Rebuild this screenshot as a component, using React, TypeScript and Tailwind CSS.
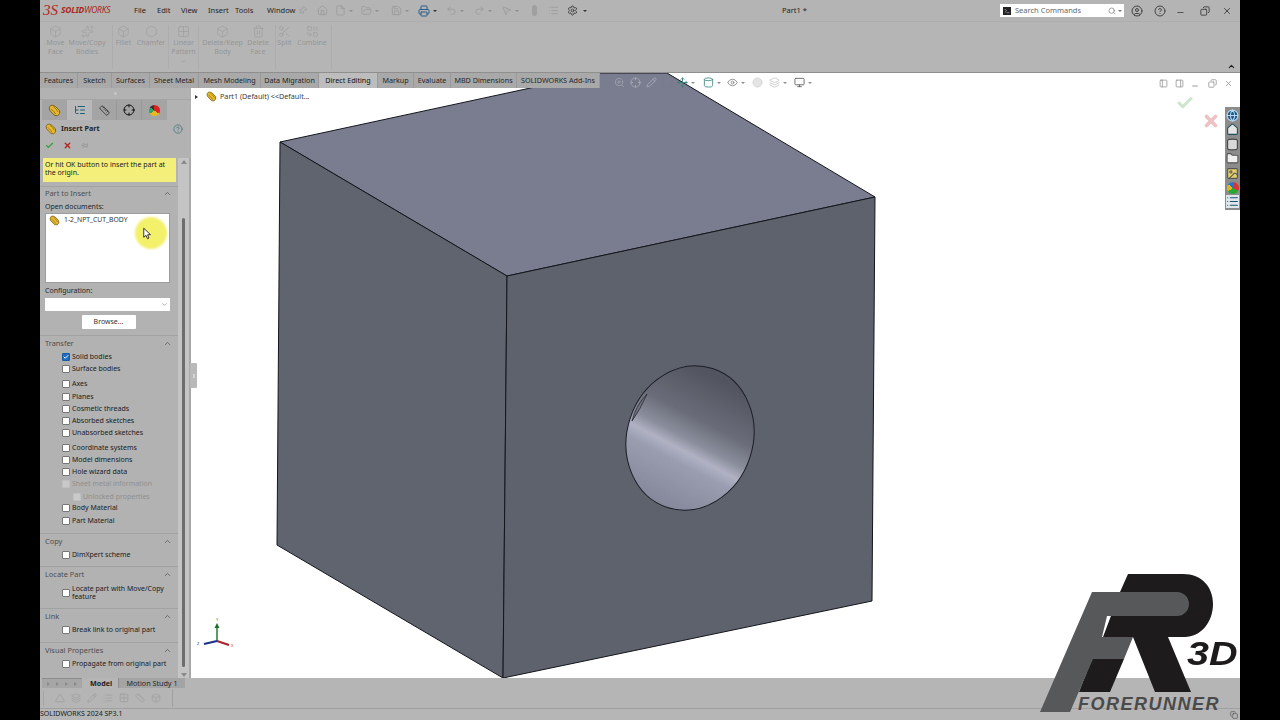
import React from "react";
import {
  Home, File, FolderOpen, Save, Printer, Undo2, Redo2, MousePointer2, Settings, Pin, Search,
  CircleUser, CircleHelp, Minus, X, Copy, ChevronUp, ChevronDown, Check, Box, Layers, Hexagon, Circle,
  Grid2x2, Trash2, Scissors, Combine, Monitor, Eye, Sparkles, ZoomIn, Pencil, Terminal, Globe,
  Folder, Image, List, Cylinder, PanelLeft, PanelRight, Triangle, Ruler, ListTree, Crosshair, Move, SquareDashed,
} from "lucide-react";

const MENU = [
  { label: "File", w: "w-[23px]" },
  { label: "Edit", w: "w-[24px]" },
  { label: "View", w: "w-[27px]" },
  { label: "Insert", w: "w-[27px]" },
  { label: "Tools", w: "w-[32px]" },
  { label: "Window", w: "w-[32px]" },
];

const RIBBON_CMDS = [
  { icon: Box, lines: ["Move", "Face"], w: "w-[31px]" },
  { icon: Sparkles, lines: ["Move/Copy", "Bodies"], w: "w-[32px] mr-[9px]" },
  { sep: true },
  { icon: Box, lines: ["Fillet"], w: "w-[21px]" },
  { icon: Hexagon, lines: ["Chamfer"], w: "w-[34px]" },
  { sep: true },
  { icon: Grid2x2, lines: ["Linear", "Pattern"], w: "w-[29px]", caret: true },
  { sep: true },
  { icon: Box, lines: ["Delete/Keep", "Body"], w: "w-[47px]" },
  { icon: Trash2, lines: ["Delete", "Face"], w: "w-[24px] mr-[5px]" },
  { sep: true },
  { icon: Scissors, lines: ["Split"], w: "w-[17px]" },
  { icon: Combine, lines: ["Combine"], w: "w-[38px]" },
  { sep: true },
];

const TABS = [
  { label: "Features", w: "w-[38px]" },
  { label: "Sketch", w: "w-[34px]" },
  { label: "Surfaces", w: "w-[38px]" },
  { label: "Sheet Metal", w: "w-[49px]" },
  { label: "Mesh Modeling", w: "w-[62px]" },
  { label: "Data Migration", w: "w-[58px]" },
  { label: "Direct Editing", w: "w-[59px]", active: true },
  { label: "Markup", w: "w-[36px]" },
  { label: "Evaluate", w: "w-[37px]" },
  { label: "MBD Dimensions", w: "w-[66px]" },
  { label: "SOLIDWORKS Add-Ins", w: "w-[83px]" },
];

function PartIcon({ className }: { className?: string }) {
  return (
    <svg viewBox="0 0 16 16" className={className}>
      <path d="M1.5 4.5 Q2.5 1 6 1.5 Q9 2 14 8 Q15.5 12.5 11.5 14.5 Q8 15 5.5 11.5 L2 7.5 Z" fill="#e8b92e" stroke="#6b5310" strokeWidth="1" />
      <path d="M3.5 6 Q6 7 9.5 12.5 M6.5 3 Q10 5.5 12.5 10" stroke="#8a6d16" strokeWidth="1" fill="none" />
    </svg>
  );
}

function Dropdown() {
  return <span className="ml-[3px] w-0 h-0 border-x-[2px] border-x-transparent border-t-[2px] border-t-[#8e8e8e]" />;
}

function TitleBar() {
  const ghost = "w-[11px] h-[11px] text-[#9c9c9c]";
  return (
    <div className="relative h-[22px] bg-[#b4b4b4] flex items-center pl-[3px] border-b border-[#adadad]">
      <div className="w-[91px] flex items-center">
        <span className="text-[15px] leading-none italic text-[#b3241c] [font-family:'Liberation_Serif',serif]">3S</span>
        <span className="ml-[3px] text-[8.5px] font-bold italic tracking-[-0.2px] text-[#a8281f]">SOLID<span className="font-normal">WORKS</span></span>
      </div>
      {MENU.map((m) => (
        <span key={m.label} className={`${m.w} text-[7.5px] text-[#1f1f1f] shrink-0`}>{m.label}</span>
      ))}
      <Pin className="ml-[-1px] w-[9px] h-[9px] text-[#9a9a9a] rotate-45" />
      <div className="ml-[10px] flex items-center">
        <Home className={ghost} />
        <span className="w-[7px]" />
        <File className={ghost} />
        <Dropdown />
        <span className="w-[8px]" />
        <FolderOpen className={ghost} />
        <Dropdown />
        <span className="w-[12px]" />
        <Save className={ghost} />
        <Dropdown />
        <span className="w-[9px]" />
        <Printer className="w-[12px] h-[12px] text-[#2a5f8e]" />
        <span className="ml-[3px] w-0 h-0 border-x-[2px] border-x-transparent border-t-[2px] border-t-[#333333]" />
        <span className="w-[9px]" />
        <Undo2 className={ghost} />
        <Dropdown />
        <span className="w-[10px]" />
        <Redo2 className={ghost} />
        <Dropdown />
        <span className="w-[9px]" />
        <MousePointer2 className={ghost} />
        <Dropdown />
        <span className="w-[13px]" />
        <span className="w-[5px] h-[11px] rounded-full bg-[#a0a0a0]" />
        <span className="w-[11px]" />
        <List className={ghost} />
        <span className="w-[8px]" />
        <Settings className="w-[11px] h-[11px] text-[#3c3c3c]" />
        <span className="ml-[5px] w-0 h-0 border-x-[2px] border-x-transparent border-t-[2px] border-t-[#333333]" />
      </div>
      <span className="absolute left-[742px] text-[7.5px] text-[#222222]">Part1 *</span>
      <div className="ml-auto flex items-center">
        <div className="w-[124px] h-[13px] bg-white flex items-center pl-[3px]">
          <Terminal className="w-[8px] h-[8px] p-[1px] bg-[#222222] text-white" />
          <span className="ml-[4px] text-[7.5px] text-[#666666]">Search Commands</span>
          <Search className="ml-auto w-[8px] h-[8px] text-[#777777]" />
          <span className="ml-[2px] mr-[2px] w-0 h-0 border-x-[2px] border-x-transparent border-t-[2px] border-t-[#777777]" />
        </div>
        <CircleUser className="ml-[7px] w-[12px] h-[12px] text-[#444444]" />
        <CircleHelp className="ml-[11px] w-[12px] h-[12px] text-[#444444]" />
        <Minus className="ml-[10px] w-[9px] h-[9px] text-[#333333] translate-y-[2px]" />
        <Copy className="ml-[15px] w-[10px] h-[10px] text-[#333333] -scale-x-100" />
        <X className="ml-[12px] mr-[8px] w-[10px] h-[10px] text-[#333333]" />
      </div>
    </div>
  );
}

function Ribbon() {
  return (
    <div className="relative h-[50px] bg-[#b5b5b5] flex pt-[3px] pb-[1px]">
      {RIBBON_CMDS.map((c, i) => {
        if (c.sep) return <div key={i} className="w-px bg-[#adadad] h-[44px] shrink-0" />;
        const Icon = c.icon!;
        return (
          <div key={i} className={`${c.w} shrink-0 flex flex-col items-center`}>
            <Icon className="w-[13px] h-[13px] text-[#a0a0a0] shrink-0" strokeWidth={1.4} />
            {c.lines!.map((l) => (
              <span key={l} className="text-[7px] leading-[9px] text-[#959595] whitespace-nowrap">{l}</span>
            ))}
            {c.caret && <ChevronDown className="mt-[3px] w-[5px] h-[5px] text-[#8c8c8c]" />}
          </div>
        );
      })}
      <ChevronUp className="absolute right-[4px] bottom-[1px] w-[9px] h-[9px] text-[#222222]" strokeWidth={3} />
    </div>
  );
}

function Tabs() {
  return (
    <div className="absolute left-0 top-0 h-[16px] w-full z-10 pointer-events-none border-t border-[#8f8f8f]">
      <div className="h-full w-[560px] flex bg-[#a9a9a9]">
        {TABS.map((t) => (
          <div
            key={t.label}
            className={`${t.w} shrink-0 flex items-center justify-center pb-px text-[7.2px] whitespace-nowrap border-r border-[#9a9a9a] ${t.active ? "bg-[#bdbdbd] text-[#111111]" : "text-[#252525]"}`}
          >
            {t.label}
          </div>
        ))}
      </div>
    </div>
  );
}

function SectionHead({ label, first }: { label: string; first?: boolean }) {
  return (
    <div className={`flex items-center justify-between pl-[5px] pr-[6px] ${first ? "h-[14px] pb-px" : "h-[16px] border-t border-[#a2a2a2]"}`}>
      <span className="text-[7.4px] text-[#4e4e4e]">{label}</span>
      <ChevronUp className="w-[9px] h-[9px] text-[#555555]" strokeWidth={2} />
    </div>
  );
}

function CheckRow({
  label,
  checked,
  disabled,
  nested,
  className,
}: {
  label: string;
  checked?: boolean;
  disabled?: boolean;
  nested?: boolean;
  className?: string;
}) {
  return (
    <div className={`h-[12px] flex items-center ${nested ? "pl-[33px]" : "pl-[22px]"} ${className ?? ""}`}>
      <span
        className={`w-[8px] h-[8px] rounded-[1px] shrink-0 flex items-center justify-center border ${
          checked ? "bg-[#1f6fc0] border-[#1a5aa0]" : disabled ? "bg-[#c9c9c9] border-[#c0c0c0]" : "bg-white border-[#777777]"
        }`}
      >
        {checked && <Check className="w-[6px] h-[6px] text-white" strokeWidth={4} />}
      </span>
      <span className={`ml-[2px] text-[7px] whitespace-nowrap ${disabled ? "text-[#8f8f8f]" : "text-[#202020]"}`}>{label}</span>
    </div>
  );
}

function PropertyPanel() {
  return (
    <div className="w-[151px] shrink-0 flex flex-col pt-[16px] bg-[#b2b2b2] relative">
      {/* grip strip */}
      <div className="h-[12px] flex items-center justify-center border-b border-[#a5a5a5]">
        <span className="w-[3px] h-[3px] rounded-full bg-[#c6c6c6]" />
      </div>
      {/* tree / property tabs */}
      <div className="h-[20px] flex pl-[2px]">
        <div className="w-[25px] bg-[#a4a4a4] flex items-center justify-center"><PartIcon className="w-[13px] h-[13px]" /></div>
        <div className="w-[25px] bg-[#b9b9b9] flex items-center justify-center"><ListTree className="w-[12px] h-[12px] text-[#1f5f7a]" /></div>
        <div className="w-[25px] bg-[#a4a4a4] flex items-center justify-center border-r border-[#999999]"><Ruler className="w-[11px] h-[11px] text-[#333333]" /></div>
        <div className="w-[25px] bg-[#a4a4a4] flex items-center justify-center border-r border-[#999999]"><Crosshair className="w-[12px] h-[12px] text-[#111111]" /></div>
        <div className="w-[25px] bg-[#a4a4a4] flex items-center justify-center">
          <span className="w-[11px] h-[11px] rounded-full bg-[conic-gradient(#d22_0_35%,#e8b820_35%_65%,#2a6_65%_85%,#333_85%)]" />
        </div>
      </div>
      {/* title */}
      <div className="h-[17px] flex items-center pl-[5px] pr-[8px]">
        <PartIcon className="w-[12px] h-[12px]" />
        <span className="ml-[4px] text-[7.2px] font-bold text-[#262626]">Insert Part</span>
        <CircleHelp className="ml-auto w-[10px] h-[10px] text-[#4b7a80]" />
      </div>
      <div className="h-[16px] flex items-center pl-[5px]">
        <Check className="w-[9px] h-[9px] text-[#3a9a3a]" strokeWidth={3} />
        <X className="ml-[9px] w-[9px] h-[9px] text-[#b81e1e]" strokeWidth={3.5} />
        <Pin className="ml-[9px] w-[7px] h-[7px] text-[#8f8f8f] rotate-90" />
      </div>
      {/* scrolling body + scrollbar */}
      <div className="flex-1 flex min-h-0 mt-[5px]">
        <div className="w-[138px] shrink-0 flex flex-col">
          <div className="h-[24px] ml-[3px] mr-[2px] bg-[#f3ef7a] px-[2px] pt-[3px] text-[7px] leading-[8px] text-[#1b1b1b]">
            Or hit OK button to insert the part at the origin.
          </div>
          <div className="mt-[4px] border-t border-[#a2a2a2]" />
          <SectionHead label="Part to Insert" first />
          <div className="pl-[5px] pr-[8px] text-[7px] text-[#262626] h-[12px] leading-[12px]">Open documents:</div>
          <div className="ml-[5px] mr-[8px] h-[70px] bg-white border border-[#9c9c9c] pl-[3px] pt-[1px] flex items-start">
            <PartIcon className="w-[11px] h-[11px]" />
            <span className="ml-[4px] text-[6.8px] leading-[10px] text-[#333333]">1-2_NPT_CUT_BODY</span>
          </div>
          <div className="pl-[5px] h-[15px] leading-[16px] text-[7px] text-[#262626]">Configuration:</div>
          <div className="ml-[5px] mr-[8px] h-[13px] bg-white flex items-center justify-end pr-[2px]">
            <ChevronDown className="w-[7px] h-[7px] text-[#777777]" />
          </div>
          <div className="mt-[4px] mb-[6px] self-center ml-[-1px] w-[54px] h-[14px] bg-white rounded-[1px] flex items-center justify-center text-[7px] text-[#333333]">Browse...</div>

          <SectionHead label="Transfer" />
          <CheckRow label="Solid bodies" checked />
          <CheckRow label="Surface bodies" />
          <CheckRow className="mt-[3px]" label="Axes" />
          <CheckRow className="mt-px" label="Planes" />
          <CheckRow label="Cosmetic threads" />
          <CheckRow label="Absorbed sketches" />
          <CheckRow label="Unabsorbed sketches" />
          <CheckRow className="mt-[3px]" label="Coordinate systems" />
          <CheckRow label="Model dimensions" />
          <CheckRow label="Hole wizard data" />
          <CheckRow label="Sheet metal information" disabled />
          <CheckRow className="mt-px" label="Unlocked properties" disabled nested />
          <CheckRow className="mt-[-1px]" label="Body Material" />
          <CheckRow className="mt-px mb-[6px]" label="Part Material" />

          <SectionHead label="Copy" />
          <CheckRow className="mb-[5px]" label="DimXpert scheme" />

          <SectionHead label="Locate Part" />
          <div className="h-[19px] mt-px mb-[6px] flex items-center pl-[22px]">
            <span className="w-[8px] h-[8px] rounded-[1px] shrink-0 bg-white border border-[#777777]" />
            <span className="ml-[2px] text-[7px] leading-[8px] text-[#202020]">Locate part with Move/Copy feature</span>
          </div>

          <SectionHead label="Link" />
          <CheckRow className="mb-[6px]" label="Break link to original part" />

          <SectionHead label="Visual Properties" />
          <CheckRow label="Propagate from original part" />
        </div>
        {/* scrollbar */}
        <div className="w-[11px] bg-[#c4c4c4] flex flex-col items-center pt-[2px] pb-[1px]">
          <span className="w-0 h-0 border-x-[3px] border-x-transparent border-b-[4px] border-b-[#8a8a8a]" />
          <div className="mt-[54px] w-[3px] flex-1 bg-[#6d6d6d] rounded-full" />
          <span className="mt-[6px] w-0 h-0 border-x-[3px] border-x-transparent border-t-[4px] border-t-[#8a8a8a]" />
        </div>
        <div className="w-[2px] bg-[#a8a8a8]" />
      </div>
      {/* splitter handle */}
      <div className="absolute left-[150px] top-[291px] w-[7px] h-[25px] bg-[#b9b9b9] rounded-r-[1px] z-10 flex items-center justify-center">
        <span className="w-[2px] h-[4px] bg-[#d5d5d5]" />
      </div>
      {/* cursor with highlight */}
      <div className="absolute left-[95px] top-[145px] w-[32px] h-[32px] z-10">
        <div className="absolute inset-0 rounded-full bg-[#f3f06a] blur-[1px]" />
        <svg viewBox="0 0 12 16" className="absolute left-[8px] top-[10px] w-[9px] h-[13px]">
          <path d="M1 1 L1 13 L4 10.5 L6 15 L8 14 L6 9.7 L10 9.5 Z" fill="#ffffff" stroke="#111111" strokeWidth="1.1" />
        </svg>
      </div>
    </div>
  );
}

function CubeDrawing() {
  return (
    <svg className="absolute inset-0 w-full h-full" viewBox="191 72 1049 606" preserveAspectRatio="none">
      <defs>
        <linearGradient id="bore" gradientUnits="userSpaceOnUse" x1="722" y1="381" x2="657" y2="505" gradientTransform="rotate(-18 690 438)">
          <stop offset="0" stopColor="#52555f" />
          <stop offset="0.32" stopColor="#6a6d79" />
          <stop offset="0.48" stopColor="#8a8d9b" />
          <stop offset="0.57" stopColor="#b0b2c4" />
          <stop offset="0.66" stopColor="#9a9db0" />
          <stop offset="1" stopColor="#84879a" />
        </linearGradient>
      </defs>
      <polygon points="280,142 507,276 875,197 667,73 600,73" fill="#797d8f" stroke="#14161c" strokeWidth="1" strokeLinejoin="round" />
      <polygon points="280,142 507,276 503,678 277,545" fill="#60646f" stroke="#14161c" strokeWidth="1" strokeLinejoin="round" />
      <polygon points="507,276 875,197 872,601 503,678" fill="#5e626c" stroke="#14161c" strokeWidth="1" strokeLinejoin="round" />
      <ellipse cx="690" cy="438" rx="63" ry="73" transform="rotate(18 690 438)" fill="url(#bore)" stroke="#1c1e26" strokeWidth="1" />
      <path d="M632 421 Q636 405 647 394 Q640 410 632 421 Z" fill="#6f727e" stroke="#1c1e26" strokeWidth="0.7" />
    </svg>
  );
}

function Triad() {
  return (
    <svg viewBox="0 0 40 40" className="absolute left-[5px] bottom-[21px] w-[40px] h-[40px]">
      <path d="M21 24 L21 9" stroke="#2a8a3a" strokeWidth="1.6" />
      <path d="M18.5 11 L21 6 L23.5 11 Z" fill="#1c6f2c" />
      <path d="M21 24 L33 28" stroke="#a5232b" strokeWidth="2" />
      <path d="M21 24 L8 27" stroke="#1c2f8c" strokeWidth="2.2" />
      <text x="20" y="3.5" fontSize="4" fill="#3a8a4a">Y</text>
      <text x="35" y="30" fontSize="4" fill="#b83a3a">X</text>
      <text x="1" y="28" fontSize="4" fill="#2a3a9a">Z</text>
    </svg>
  );
}

function Viewport() {
  const hud = "w-[11px] h-[11px]";
  return (
    <div className="flex-1 relative bg-white overflow-hidden">
      <CubeDrawing />
      {/* feature tree flyout */}
      <div className="absolute left-[4px] top-[18px] flex items-center h-[13px]">
        <span className="w-0 h-0 border-y-[2.5px] border-y-transparent border-l-[3px] border-l-[#333333]" />
        <PartIcon className="ml-[8px] w-[11px] h-[11px]" />
        <span className="ml-[3px] text-[7.2px] text-[#3a3a3a] whitespace-nowrap">Part1 (Default) &lt;&lt;Default...</span>
      </div>
      {/* heads-up toolbar */}
      <div className="absolute left-[423px] top-[5px] flex items-center">
        <ZoomIn className={`${hud} text-[#9aa0ae]`} />
        <Crosshair className={`ml-[5px] ${hud} text-[#a5a9b5]`} />
        <Pencil className={`ml-[5px] ${hud} text-[#a5a9b5]`} />
        <SquareDashed className={`ml-[5px] ${hud} text-[#777c89]`} />
        <Move className={`ml-[4px] ${hud} text-[#3f7f7c]`} />
        <Dropdown />
        <span className="w-[8px]" />
        <Cylinder className={`${hud} text-[#4c9090]`} />
        <Dropdown />
        <span className="w-[6px]" />
        <Eye className={`${hud} text-[#8a8a8a]`} />
        <Dropdown />
        <span className="w-[7px]" />
        <Circle className={`${hud} text-[#d8d8d8] fill-[#e4e4e4]`} />
        <Layers className={`ml-[6px] ${hud} text-[#cccccc]`} />
        <Dropdown />
        <span className="w-[7px]" />
        <Monitor className={`${hud} text-[#666666]`} />
        <Dropdown />
      </div>
      {/* window controls */}
      <div className="absolute right-[7px] top-[7px] flex items-center text-[#8f8f8f]">
        <PanelLeft className="w-[9px] h-[9px]" />
        <PanelRight className="ml-[7px] w-[9px] h-[9px]" />
        <Minus className="ml-[7px] w-[8px] h-[8px] translate-y-[2px] text-[#666666]" />
        <Copy className="ml-[9px] w-[9px] h-[9px] -scale-x-100" />
        <X className="ml-[7px] w-[9px] h-[9px]" />
      </div>
      {/* confirmation corner */}
      <Check className="absolute left-[984px] top-[22px] w-[20px] h-[18px] text-[#cde6cd]" strokeWidth={4} />
      <X className="absolute left-[1011px] top-[40px] w-[18px] h-[18px] text-[#eec2c4]" strokeWidth={5} />
      {/* task pane tabs */}
      <div className="absolute right-0 top-[35px] w-[15px] h-[103px] bg-[#8c8c8c] flex flex-col items-center justify-around py-[1px]">
        <Globe className="w-[13px] h-[13px] text-[#bcd8ee] fill-[#1f5a8c]" />
        <Home className="w-[13px] h-[13px] text-[#1c4f5c] fill-[#e5e5e5]" />
        <Cylinder className="w-[13px] h-[13px] text-[#444444] fill-[#d8d8d8]" />
        <Folder className="w-[13px] h-[13px] text-[#555555] fill-[#efefef]" />
        <Image className="w-[13px] h-[13px] text-[#555555] fill-[#e3cf6a]" />
        <span className="w-[12px] h-[12px] rounded-full bg-[conic-gradient(#d33_0_33%,#2a3_33%_66%,#e6b820_66%_85%,#27c_85%)]" />
        <List className="w-[13px] h-[13px] text-[#1c4f6c] bg-[#dfe7ec]" />
      </div>
      <Triad />
    </div>
  );
}

function ModelTabs() {
  return (
    <div className="h-[30px] bg-[#b5b5b5] flex flex-col">
      <div className="h-[10px] flex items-center">
        <div className="ml-[2px] w-[40px] h-[10px] bg-[#a6a6a6] border-t border-[#8c8c8c] flex items-center justify-around px-[2px]">
          {[0, 1, 2, 3].map((i) => (
            <span key={i} className="w-0 h-0 border-y-[2px] border-y-transparent border-l-[3px] border-l-[#8a8a8a]" />
          ))}
        </div>
        <span className="ml-[8px] w-[28px] text-[7.2px] font-bold text-[#1d1d1d]">Model</span>
        <div className="h-[10px] w-[67px] bg-[#a4a4a4] border-l border-[#8f8f8f] flex items-center justify-center text-[7.2px] text-[#262626] whitespace-nowrap">Motion Study 1</div>
      </div>
      <div className="flex-1 flex items-center text-[#a0a0a0]">
        <span className="ml-[3px] w-px h-[15px] bg-[#a5a5a5]" />
        <div className="ml-[11px] flex items-center gap-[6px] w-[117px]">
          <Triangle className="w-[10px] h-[10px]" />
          <Layers className="w-[10px] h-[10px]" />
          <Pencil className="w-[10px] h-[10px]" />
          <List className="w-[10px] h-[10px]" />
          <Grid2x2 className="w-[10px] h-[10px]" />
          <Ruler className="w-[10px] h-[10px]" />
          <Box className="w-[10px] h-[10px]" />
        </div>
        <span className="w-px h-[18px] bg-[#a0a0a0]" />
      </div>
    </div>
  );
}

function StatusBar() {
  return (
    <div className="h-[12px] bg-[#b6b6b6] border-t border-[#a0a0a0] flex items-center">
      <span className="text-[7px] text-[#202020] whitespace-nowrap">SOLIDWORKS 2024 SP3.1</span>
      <Copy className="ml-auto mr-[2px] w-[8px] h-[8px] text-[#555555]" />
    </div>
  );
}

function ForerunnerLogo() {
  return (
    <div className="absolute left-[980px] top-[560px] w-[220px] h-[160px] z-20">
      <svg viewBox="0 0 220 160" className="absolute left-0 top-0 w-[220px] h-[160px]">
        <path
          d="M108 14 L163 14 C182 14 193 27 193 44 C193 63 180 77 165 77 L148 77 L171 132 L135 132 L113 77 L83 77 L100 32 Z"
          fill="#1d1b1c"
        />
        <path d="M72 99 L104 99 L90 132 L59 132 Z" fill="#1d1b1c" />
        <path
          d="M72 32 L157 32 A12 12 0 0 1 157 56 L87 56 L82 77 L113 77 L104 99 L73 99 L50 152 L20 152 Z"
          fill="#565859"
        />
      </svg>
      <span className="absolute left-[167px] top-[76px] origin-left scale-x-[1.2] text-[33px] leading-[36px] font-bold italic text-[#1d1b1c] [font-family:'Liberation_Sans',sans-serif]">3D</span>
      <span className="absolute left-[58px] top-[134px] text-[18px] leading-[20px] font-bold italic tracking-[1.5px] text-[#4a4a4a] [font-family:'Liberation_Sans',sans-serif]">FORERUNNER</span>
    </div>
  );
}

export default function App() {
  return (
    <div className="w-[1280px] h-[720px] bg-black overflow-hidden flex justify-center [font-family:'Noto_Sans','Open_Sans',sans-serif]">
      <div className="relative w-[1200px] h-[720px] flex flex-col">
        <TitleBar />
        <Ribbon />
        <div className="relative flex-1 flex min-h-0">
          <Tabs />
          <PropertyPanel />
          <Viewport />
        </div>
        <ModelTabs />
        <StatusBar />
        <ForerunnerLogo />
      </div>
    </div>
  );
}
